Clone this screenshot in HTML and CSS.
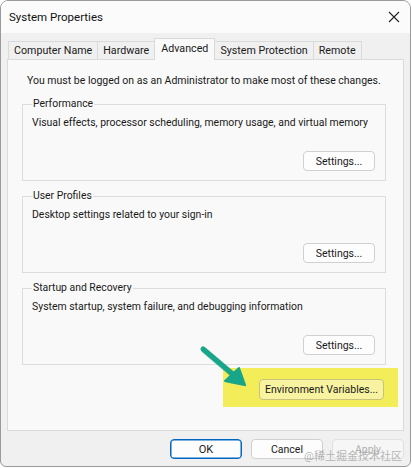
FILE: index.html
```html
<!DOCTYPE html>
<html>
<head>
<meta charset="utf-8">
<link rel="stylesheet" href="styles.css">
</head>
<body>
<div class="window">
  <div class="titlebar">
    <span class="title">System Properties</span>
    <svg class="close" width="12" height="12" viewBox="0 0 12 12"><path d="M1 1L11 11M11 1L1 11" stroke="#222" stroke-width="1.1" fill="none"/></svg>
  </div>
  <div class="body">
    <div class="tabs">
      <div class="tab">Computer Name</div>
      <div class="tab">Hardware</div>
      <div class="tab active">Advanced</div>
      <div class="tab">System Protection</div>
      <div class="tab">Remote</div>
    </div>
    <div class="panel">
      <p class="note">You must be logged on as an Administrator to make most of these changes.</p>
      <fieldset class="group">
        <legend>Performance</legend>
        <p class="desc">Visual effects, processor scheduling, memory usage, and virtual memory</p>
        <div class="btnrow"><button class="btn">Settings...</button></div>
      </fieldset>
      <fieldset class="group">
        <legend>User Profiles</legend>
        <p class="desc">Desktop settings related to your sign-in</p>
        <div class="btnrow"><button class="btn">Settings...</button></div>
      </fieldset>
      <fieldset class="group">
        <legend>Startup and Recovery</legend>
        <p class="desc">System startup, system failure, and debugging information</p>
        <div class="btnrow"><button class="btn">Settings...</button></div>
      </fieldset>
      <div class="envrow">
        <div class="highlight"><button class="btn env">Environment Variables...</button></div>
      </div>
      <svg class="arrow" width="60" height="50" viewBox="0 0 60 50">
        <path d="M5 5 L38 33" stroke="#0f7a66" stroke-opacity="0.35" stroke-width="6" stroke-linecap="round" transform="translate(1.5,1.5)"/>
        <path d="M5 5 L38 33" stroke="#17a689" stroke-width="5" stroke-linecap="round"/>
        <path d="M47 41 L27 37 L41 24 Z" fill="#0f7a66" fill-opacity="0.35" transform="translate(1.5,1.5)"/>
        <path d="M47 41 L27 37 L41 24 Z" fill="#17a689" stroke="#17a689" stroke-width="2" stroke-linejoin="round"/>
      </svg>
    </div>
    <div class="footer">
      <button class="btn primary">OK</button>
      <button class="btn">Cancel</button>
      <button class="btn disabled">Apply</button>
      <span class="watermark">@稀土掘金技术社区</span>
    </div>
  </div>
</div>
</body>
</html>
```
FILE: styles.css
```css
* { box-sizing: border-box; }
html, body { margin: 0; padding: 0; background: #ffffff; }
body {
  font-family: Roboto, "Noto Sans CJK SC", sans-serif;
  font-size: 10.5px;
  color: #1a1a1a;
  width: 412px;
  height: 468px;
  overflow: hidden;
}
.window {
  width: 411px;
  height: 467px;
  border: 1px solid #9a9a9a;
  border-radius: 8px 8px 6px 6px;
  background: #f0f0f0;
  overflow: hidden;
  display: flex;
  flex-direction: column;
}
.titlebar {
  height: 32px;
  flex: none;
  background: #fbfbfb;
  display: flex;
  align-items: center;
  justify-content: space-between;
  padding: 0 10px 0 8px;
}
.title { font-size: 11.5px; color: #111; }
.close { display: block; }
.body {
  flex: 1;
  display: flex;
  flex-direction: column;
  padding: 5px 6px 0 6px;
}
.tabs {
  display: flex;
  align-items: flex-end;
  height: 21px;
  padding-left: 1px;
  position: relative;
  z-index: 1;
}
.tab {
  height: 18px;
  line-height: 17px;
  padding: 0 5px;
  font-size: 10.7px;
  border: 1px solid #dadada;
  border-bottom: none;
  margin-right: -1px;
  background: #f0f0f0;
  color: #1a1a1a;
  white-space: nowrap;
}
.tab.active {
  height: 22px;
  line-height: 19px;
  background: #f9f9f9;
  margin-bottom: -1px;
  padding: 0 6px;
  position: relative;
}
.panel {
  height: 372px;
  background: #f9f9f9;
  border: 1px solid #dadada;
  padding: 13px 17px 0 14px;
  position: relative;
}
.note { margin: 0 0 8px 5px; line-height: 16px; font-size: 10.5px; white-space: nowrap; }
.group {
  margin: 0 0 8px 0;
  padding: 0 10px 9px 9px;
  border: 1px solid #dcdcdc;
  min-width: 0;
}
.group legend {
  padding: 0 1px;
  line-height: 14px;
  font-size: 10.4px;
}
.desc { margin: 5px 0 0 0; line-height: 14px; font-size: 10.45px; white-space: nowrap; }
.btnrow { display: flex; justify-content: flex-end; margin-top: 21px; }
.btn {
  font-family: inherit;
  font-size: 10.5px;
  color: #1a1a1a;
  width: 72px;
  height: 20px;
  padding: 0;
  border: 1px solid #d0d0d0;
  border-radius: 4px;
  background: #fdfdfd;
}
.envrow { display: flex; justify-content: flex-end; margin: -5px -12px 0 0; }
.highlight {
  background: #f3ed5a;
  padding: 11px 14px 7px 36px;
}
.btn.env { width: 125px; height: 21px; border-color: #c9c27a; background: #f8f3a0; }
.arrow { position: absolute; left: 190px; top: 284px; }
.footer {
  flex: 1;
  display: flex;
  justify-content: flex-end;
  align-items: flex-start;
  gap: 9px;
  padding: 8px 0 0 0;
  position: relative;
}
.btn.primary { border-color: #0067c0; box-shadow: inset 0 0 0 0.5px #0067c0; font-size: 11px; }
.btn.disabled { color: #b0b0b0; background: #f6f6f6; border-color: #e0e0e0; }
.watermark {
  position: absolute;
  right: 2px;
  top: 16px;
  font-size: 11px;
  color: rgba(150,150,150,0.7);
}
```
